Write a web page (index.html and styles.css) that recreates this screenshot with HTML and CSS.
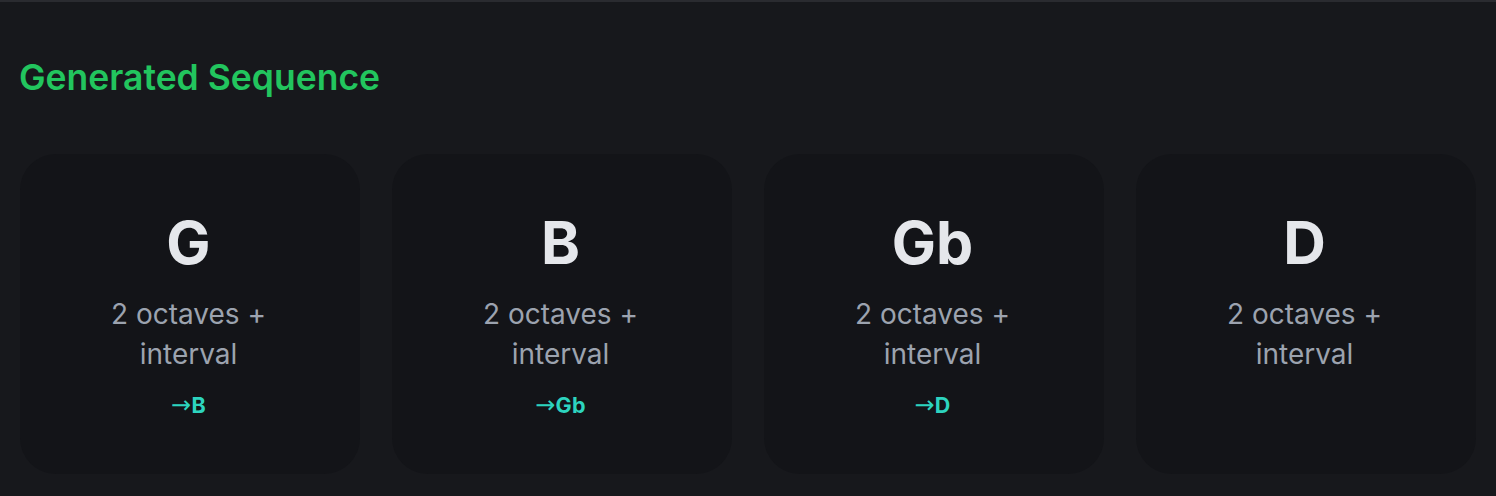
FILE: index.html
```html
<!DOCTYPE html>
<html>
<head>
<meta charset="utf-8">
<link rel="stylesheet" href="styles.css">
</head>
<body>
<div class="topline"></div>
<section class="panel">
  <h2 class="title">Generated Sequence</h2>
  <div class="cards">
    <div class="card">
      <div class="note">G</div>
      <div class="desc">2 octaves + interval</div>
      <div class="next"><span class="arrow">→</span>B</div>
    </div>
    <div class="card">
      <div class="note">B</div>
      <div class="desc">2 octaves + interval</div>
      <div class="next"><span class="arrow">→</span>Gb</div>
    </div>
    <div class="card">
      <div class="note">Gb</div>
      <div class="desc">2 octaves + interval</div>
      <div class="next"><span class="arrow">→</span>D</div>
    </div>
    <div class="card">
      <div class="note">D</div>
      <div class="desc">2 octaves + interval</div>
    </div>
  </div>
</section>
</body>
</html>
```
FILE: styles.css
```css
html, body {
  margin: 0;
  padding: 0;
  background: #17181c;
  font-family: Inter, "Noto Sans", sans-serif;
  height: 100%;
  overflow: hidden;
}
.topline {
  height: 2px;
  background: #2a2b30;
}
.panel {
  padding: 52px 20px 0 20px;
}
.title {
  margin: 0 0 0 -1px;
  font-size: 35.5px;
  line-height: 48px;
  font-weight: 600;
  color: #22c55e;
}
.cards {
  margin-top: 52px;
  display: grid;
  grid-template-columns: repeat(4, 1fr);
  gap: 32px;
}
.card {
  background: #131418;
  border-radius: 36px;
  height: 320px;
  box-sizing: border-box;
  padding: 57px 44px 0 44px;
  display: flex;
  flex-direction: column;
  align-items: center;
  text-align: center;
}
.note {
  font-size: 59px;
  font-weight: 700;
  line-height: 64px;
  color: #e5e7eb;
  margin-right: 3px;
}
.desc {
  margin-top: 19px;
  font-size: 28px;
  line-height: 40px;
  color: #9ca3af;
  margin-right: 3px;
}
.next {
  margin-top: 17px;
  font-size: 21.5px;
  font-weight: 700;
  line-height: 28px;
  color: #2dd4bf;
  margin-right: 3px;
  letter-spacing: 0.3px;
}
.arrow {
  font-family: "DejaVu Sans", sans-serif;
  font-weight: 400;
  font-size: 24px;
}
```
